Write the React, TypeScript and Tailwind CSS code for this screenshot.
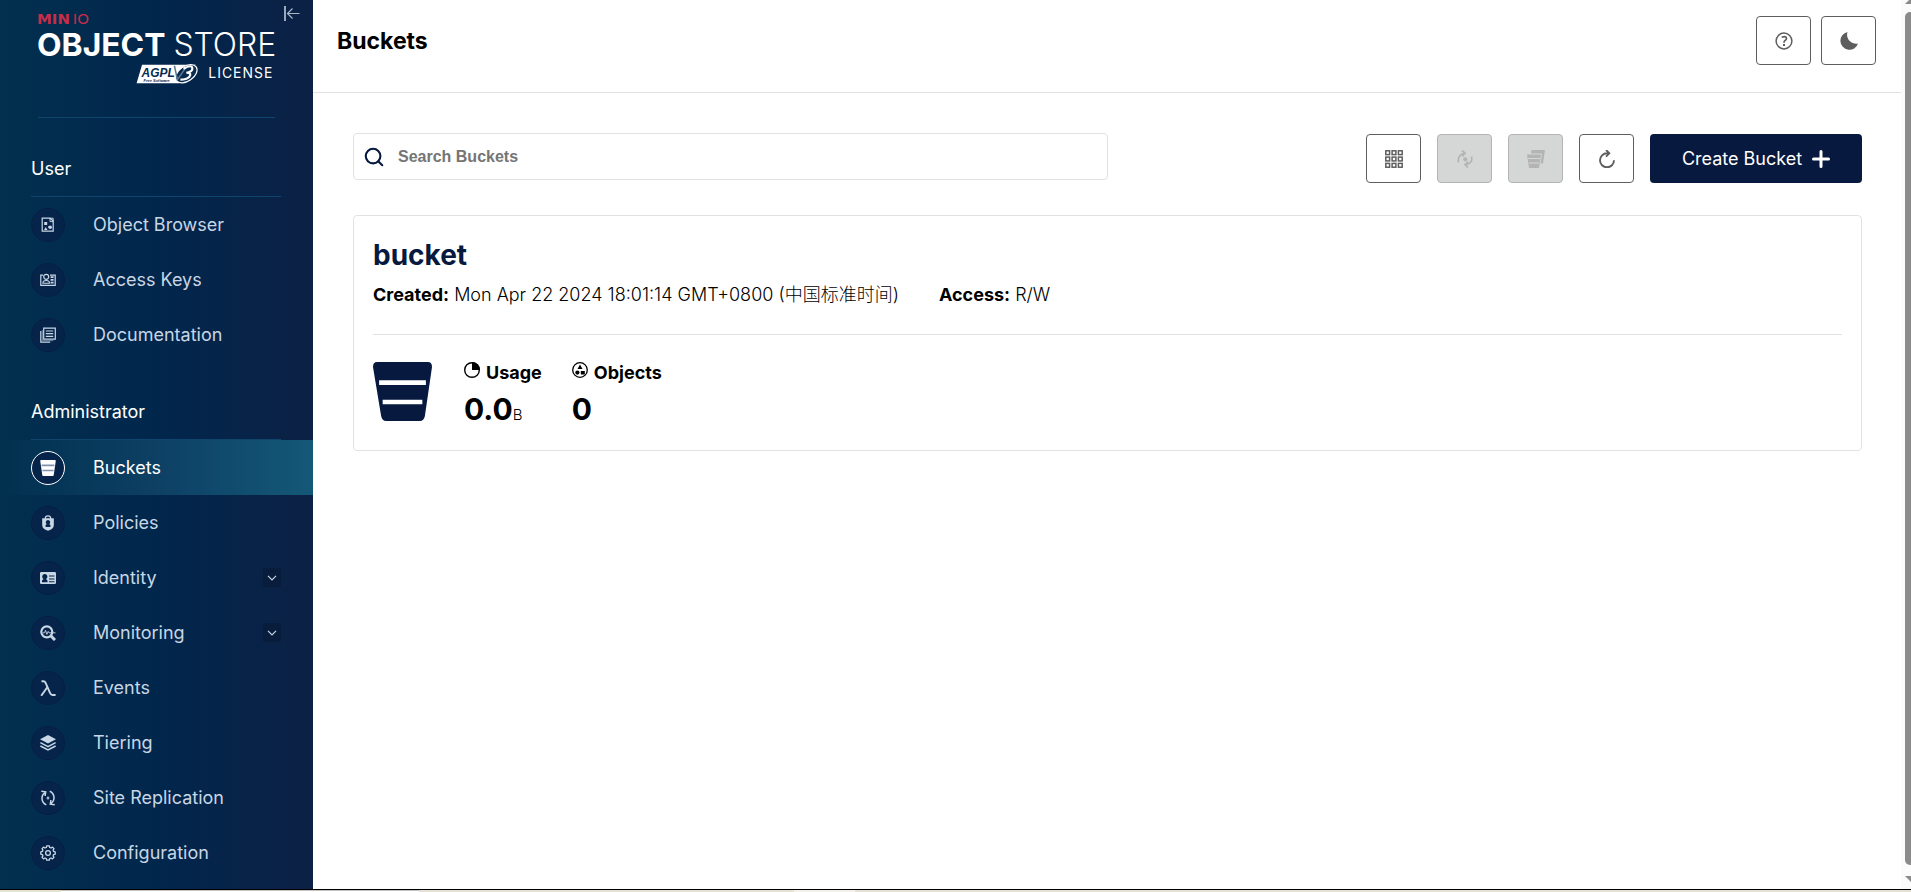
import { useState, type ReactNode } from "react";
import { Search } from "lucide-react";

type NavEntry = { label: string; icon: ReactNode; active?: boolean; expandable?: boolean };

const glyph = "h-4 w-4";

const ObjectBrowserIcon = () => (
  <svg viewBox="0 0 16 16" className={glyph} fill="none" stroke="currentColor">
    <path d="M2.2 1.2h7.6l3.4 2.6v10.4h-11z" strokeWidth="1.2" />
    <path d="M10 1.2h3.2v3.4H10z" strokeWidth="0.9" />
    <path d="M4.2 5h3v3h-3zM5.7 10l1.8 3H4zM8.2 9.2h1v1h-1z" fill="currentColor" stroke="none" />
    <circle cx="10.2" cy="10.3" r="1.8" fill="currentColor" stroke="none" />
  </svg>
);

const AccessKeysIcon = () => (
  <svg viewBox="0 0 16 16" className={glyph} fill="none" stroke="currentColor">
    <path d="M3 3.2H.8v10.2h14.4V3.2H10" strokeWidth="1.2" />
    <circle cx="6.2" cy="4.8" r="2.5" strokeWidth="1.2" />
    <path d="M2.9 11.2c0-3.6 6.6-3.6 6.6 0z" strokeWidth="1.1" />
    <path d="M10.6 5.2h3M10.6 7.8h3M10.6 10.6h3" strokeWidth="1.7" />
  </svg>
);

const DocumentationIcon = () => (
  <svg viewBox="0 0 16 16" className={glyph} fill="none" stroke="currentColor">
    <path d="M3.7 1.2h11.6v10.9H3.7z" strokeWidth="1.2" />
    <path d="M.8 4v11.2h9.4" strokeWidth="1.2" />
    <path d="M2.4 3.2v10.4h11" strokeWidth="0.5" />
    <path d="M5.8 4h7.4M5.8 6.6h7.4M5.8 9.4h7.4" strokeWidth="1.2" />
  </svg>
);

const BucketGlyph = ({ className }: { className: string }) => (
  <svg viewBox="0 0 58 58" className={className}>
    <path
      fill="currentColor"
      fillRule="evenodd"
      d="M4 0h50q4 0 4 5l-7 48q-1 5-5 5H13q-4 0-5-5L0 5q0-5 4-5zM6 18v4.500h46V18zM9.500 37v4.500h39V37z"
    />
  </svg>
);

const BucketNavIcon = () => (
  <svg viewBox="0 0 16 16" className={glyph}>
    <path fill="currentColor" d="M.8 0h14.400l.6.8L13.700 15.200q-.1.800-.9.800H3.200q-.8 0-.9-.8L.2.800z" />
    <path stroke="#8092ac" strokeWidth="1.700" d="M1.600 5.300h12.800M2.400 10.500h11.200" />
  </svg>
);

const PoliciesIcon = () => (
  <svg viewBox="0 0 16 16" className={glyph}>
    <path d="M5.300 4V3.200a2.700 2.400 0 0 1 5.400 0V4" fill="none" stroke="currentColor" strokeWidth="1.200" />
    <path
      fill="currentColor"
      fillRule="evenodd"
      d="M2.200 3.300h11.600v7q0 3.700-5.800 5.500-5.800-1.800-5.800-5.500zM8 5a2.200 2.200 0 0 0-1.300 4Q5.300 9.800 5.300 11.400q2.700 1.200 5.400 0Q10.700 9.800 9.300 9A2.200 2.200 0 0 0 8 5z"
    />
  </svg>
);

const IdentityIcon = () => (
  <svg viewBox="0 0 16 16" className={glyph}>
    <path
      fill="currentColor"
      fillRule="evenodd"
      d="M1.300 2h13.400q1.300 0 1.300 1.300v9.400q0 1.300-1.300 1.300H1.300Q0 14 0 12.700V3.300Q0 2 1.300 2zM2 10.500v1.800h5.500v-1.800L6 9a2.600 2.600 0 1 0-2.400 0zM9 5.600v1h5.500v-1zM9 8.400v1h5.500v-1zM9 11.200v1h5.500v-1z"
    />
  </svg>
);

const MonitoringIcon = () => (
  <svg viewBox="0 0 16 16" className={glyph} fill="none" stroke="currentColor">
    <circle cx="6.800" cy="6.800" r="5.500" strokeWidth="2.200" />
    <path d="M11 11l4 4" strokeWidth="3" />
    <path d="M3 7.800h1.500l1-2.600 1.400 4.200 1.300-3 .8 1.400H15.500" strokeWidth="0.900" />
  </svg>
);

const LambdaIcon = () => (
  <svg viewBox="0 0 16 16" className={glyph} fill="none" stroke="currentColor" strokeWidth="1.900">
    <path d="M1.500 1.200h1.800q1.600 0 2.300 1.600l4.500 10.300q.8 1.900 2.500 1.900h3" />
    <path d="M7.500 7L1.200 15.800" />
  </svg>
);

const TieringIcon = () => (
  <svg viewBox="0 0 16 16" className={glyph} fill="none" stroke="currentColor">
    <path d="M8 0l8 4.300-8 4.300-8-4.300z" fill="currentColor" stroke="none" />
    <path d="M.4 7.700L8 11.700l7.600-4M.4 11L8 15l7.600-4" strokeWidth="1.500" />
  </svg>
);

const SiteReplicationIcon = () => (
  <svg viewBox="0 0 16 16" className={glyph} fill="none" stroke="currentColor" strokeWidth="1.500">
    <path d="M6.300 14.800A7 7 0 0 1 5 2.600M1.300 1.200l4.400.6-.6 4.200" />
    <path d="M9.700 1.200a7 7 0 0 1 1.300 12.200M14.700 14.800l-4.400-.6.600-4.200" />
    <path d="M8 6.600v2.800M6.600 8h2.800" strokeWidth="1.200" />
  </svg>
);

const GearIcon = () => (
  <svg viewBox="0 0 16 16" className={glyph} fill="none" stroke="currentColor" strokeWidth="1.300">
    <path
      strokeLinejoin="round"
      d="M6.700.800h2.600l.4 1.700 1.300.5 1.500-.9 1.500 1.500-.9 1.500.5 1.300 1.600.4v2.400l-1.600.4-.5 1.300.9 1.500-1.500 1.500-1.500-.9-1.300.5-.4 1.700H6.700l-.4-1.700-1.300-.5-1.500.9L2 12.400l.9-1.500-.5-1.300-1.600-.4V6.800l1.600-.4.500-1.300L2 3.600l1.500-1.500 1.500.9 1.300-.5z"
    />
    <circle cx="8" cy="8" r="2.400" />
  </svg>
);

const userEntries: NavEntry[] = [
  { label: "Object Browser", icon: <ObjectBrowserIcon /> },
  { label: "Access Keys", icon: <AccessKeysIcon /> },
  { label: "Documentation", icon: <DocumentationIcon /> },
];

const adminEntries: NavEntry[] = [
  { label: "Buckets", icon: <BucketNavIcon />, active: true },
  { label: "Policies", icon: <PoliciesIcon /> },
  { label: "Identity", icon: <IdentityIcon />, expandable: true },
  { label: "Monitoring", icon: <MonitoringIcon />, expandable: true },
  { label: "Events", icon: <LambdaIcon /> },
  { label: "Tiering", icon: <TieringIcon /> },
  { label: "Site Replication", icon: <SiteReplicationIcon /> },
  { label: "Configuration", icon: <GearIcon /> },
];

function NavItem({ label, icon, active, expandable }: NavEntry) {
  return (
    <li>
      <a
        href="#"
        aria-current={active ? "page" : undefined}
        className={`flex h-[55px] items-center pr-8 pl-[31px] text-lg ${
          active
            ? "bg-linear-to-r from-[#02304f] via-[#0d4064] to-[#145878] text-white"
            : "text-[#c8d6e5]"
        }`}
      >
        <span
          className={`flex h-[34px] w-[34px] shrink-0 items-center justify-center rounded-full border bg-[#06244a] ${
            active ? "border-white" : "border-[#051f44]"
          }`}
        >
          {icon}
        </span>
        <span className="ml-7 flex-1">{label}</span>
        {expandable && (
          <span className="flex h-[19px] w-[18px] items-center justify-center rounded-xs bg-[#081c3c]">
            <svg viewBox="0 0 10 6" className="h-[6px] w-[10px]" fill="none" stroke="currentColor">
              <path d="M1 .8l4 4 4-4" strokeWidth="1.200" />
            </svg>
          </span>
        )}
      </a>
    </li>
  );
}

function NavGroup({ title, entries }: { title: string; entries: NavEntry[] }) {
  return (
    <section>
      <h2 className="mr-8 ml-[31px] border-b border-[#0f446c] pb-[13px] text-lg leading-7 text-white">
        {title}
      </h2>
      <ul>
        {entries.map((entry) => (
          <NavItem key={entry.label} {...entry} />
        ))}
      </ul>
    </section>
  );
}

function Logo() {
  return (
    <svg viewBox="0 0 238 72" className="block h-[72px] w-full overflow-visible" preserveAspectRatio="xMinYMin meet">
      <g fill="#c72c48" fontFamily="'DejaVu Sans', sans-serif" fontSize="15">
        <text x="-1" y="11" fontWeight="700">MIN</text>
        <text x="35" y="11">IO</text>
      </g>
      <g fill="#fff" fontFamily="Inter, sans-serif" fontSize="32">
        <text x="-1" y="43" fontWeight="700">OBJECT</text>
        <text x="136" y="43" fontWeight="300">STORE</text>
      </g>
      <path fill="#fff" d="M104.500 52h54q-8 9-17 18.500H99z" />
      <ellipse cx="149" cy="61" rx="12" ry="7.500" transform="rotate(-35 149 61)" fill="#082b50" stroke="#fff" strokeWidth="1.200" />
      <path d="M137 53l3 14 9-13" fill="none" stroke="#5f7690" strokeWidth="1.500" />
      <path d="M146 56q9-5 9 0 0 3-6 4 6 0 3 4-3 3-9 3" fill="none" stroke="#fff" strokeWidth="2.200" />
      <g fill="#082b50" fontFamily="'Liberation Sans Narrow', 'Liberation Sans', sans-serif" fontStyle="italic" fontWeight="700">
        <text x="104" y="64" fontSize="12">AGPL</text>
        <text x="106" y="69" fontSize="4">Free Software</text>
      </g>
      <text x="171" y="65" fill="#fff" fontFamily="Inter, sans-serif" fontSize="14" letterSpacing="1">LICENSE</text>
    </svg>
  );
}

function IconButton({ label, disabled, onClick, children }: { label: string; disabled?: boolean; onClick?: () => void; children: ReactNode }) {
  return (
    <button
      type="button"
      aria-label={label}
      disabled={disabled}
      onClick={onClick}
      className="flex h-[49px] w-[55px] shrink-0 items-center justify-center rounded-sm border border-[#5e5e5e] bg-white text-[#5e5e5e] disabled:border-[#b4b4b4] disabled:bg-[#d5d7d6] disabled:text-[#b4b4b4]"
    >
      {children}
    </button>
  );
}

const gridCells = [0, 1, 2].flatMap((row) => [0, 1, 2].map((col) => ({ x: col * 6.3 + 0.8, y: row * 6.3 + 0.8 })));

export default function App() {
  const [query, setQuery] = useState("");

  return (
    <div className="flex h-screen flex-col bg-white font-[Inter,'Noto_Sans_CJK_SC',sans-serif] text-black">
      <div className="flex min-h-0 flex-1">
        <aside className="relative w-[313px] shrink-0 overflow-hidden bg-linear-to-r from-[#03304f] via-[#01264c] to-[#0c2145]">
          <button type="button" aria-label="Collapse menu" className="absolute top-[6px] right-[13px] text-[#a9b9cb]">
            <svg viewBox="0 0 16 15" className="h-[15px] w-4" fill="none" stroke="currentColor">
              <path d="M1 0v15" strokeWidth="1.800" />
              <path d="M15.500 7.500H4M8.500 2.500l-5 5 5 5" strokeWidth="1.200" />
            </svg>
          </button>
          <div className="mx-[38px] border-b border-[#0f446c] pt-[13px] pb-8">
            <Logo />
          </div>
          <nav className="flex flex-col gap-9 pt-[37px]">
            <NavGroup title="User" entries={userEntries} />
            <NavGroup title="Administrator" entries={adminEntries} />
          </nav>
        </aside>

        <main className="min-w-0 flex-1">
          <header className="flex h-[93px] items-start justify-between border-b border-[#e2e2e2] pt-4 pr-[25px] pl-6">
            <h1 className="pt-[9px] text-[23px] leading-8 font-bold">Buckets</h1>
            <div className="flex gap-[10px]">
              <IconButton label="Help">
                <svg viewBox="0 0 18 18" className="h-[18px] w-[18px]" fill="none" stroke="currentColor">
                  <circle cx="9" cy="9" r="7.900" strokeWidth="1.500" />
                  <path d="M6.700 5.200q4.800-1.400 4.800 1.300 0 1.300-1.400 1.900Q9 9 9 10.800" strokeWidth="1.700" />
                  <path d="M9 12v2" strokeWidth="2" />
                </svg>
              </IconButton>
              <IconButton label="Dark mode">
                <svg viewBox="0 0 18 18" className="h-[18px] w-[18px]">
                  <path fill="currentColor" d="M7.500 0A9 9 0 1 0 18 11.500 9 9 0 0 1 7.500 0z" />
                </svg>
              </IconButton>
            </div>
          </header>

          <div className="pt-10 pr-[39px] pl-10">
            <div className="flex items-start justify-between">
              <label className="flex h-[47px] w-1/2 items-center gap-[13px] rounded-sm border border-[#e2e2e2] px-[9px]">
                <Search className="h-[22px] w-[22px] text-[#07193e]" strokeWidth={2.3} />
                <input
                  aria-label="Search Buckets"
                  placeholder="Search Buckets"
                  value={query}
                  onChange={(event) => setQuery(event.target.value)}
                  className="min-w-0 flex-1 bg-transparent font-['Liberation_Sans',sans-serif] text-base font-bold outline-none placeholder:text-[#757575]"
                />
              </label>
              <div className="flex gap-4 pt-px">
                <IconButton label="Grid view">
                  <svg viewBox="0 0 18 18" className="h-[18px] w-[18px]" fill="none" stroke="currentColor">
                    {gridCells.map(({ x, y }) => (
                      <rect key={`${x}-${y}`} x={x} y={y} width="3.800" height="3.800" strokeWidth="1.500" />
                    ))}
                  </svg>
                </IconButton>
                <IconButton label="Set replication" disabled>
                  <svg viewBox="0 0 18 18" className="h-[18px] w-[18px]" fill="none" stroke="currentColor" strokeWidth="1.700">
                    <path d="M2.500 12.500Q1 5 8.500 3.300M6 .500l3 2.700-2.600 3.300M15.500 6.500q1.500 7-6 8.200M12 11.500l-3 3.200 3 2.800" />
                    <circle cx="9.200" cy="9.300" r="2.100" fill="currentColor" stroke="none" />
                  </svg>
                </IconButton>
                <IconButton label="Set lifecycle" disabled>
                  <svg viewBox="0 0 18 18" className="h-[18px] w-[18px]" fill="currentColor">
                    <path d="M4.500 0H18l-2 13.500h-2.500L15 3.500H4zM0 4.500h14l-2 13.500H2z" />
                    <path d="M1 8.500h12M2 13h10" stroke="#d5d7d6" />
                  </svg>
                </IconButton>
                <IconButton label="Refresh">
                  <svg viewBox="0 0 18 18" className="h-[18px] w-[18px]" fill="none" stroke="currentColor" strokeWidth="1.900">
                    <path d="M10.500 3.300H9A7 7 0 1 0 16 10.300M8 0l3.300 3.300L8 6.600" />
                  </svg>
                </IconButton>
                <button type="button" className="flex h-[49px] w-[212px] items-center justify-center gap-[10px] rounded-sm bg-[#07193e] text-lg text-white">
                  Create Bucket
                  <svg viewBox="0 0 18 18" className="h-[18px] w-[18px]" stroke="currentColor" strokeWidth="3" strokeLinecap="round">
                    <path d="M9 1.500v15M1.500 9h15" />
                  </svg>
                </button>
              </div>
            </div>

            <article className="mt-8 rounded-sm border border-[#e2e2e2] px-[19px] pt-[19px] pb-[10px]">
              <h2 className="text-[28px] leading-10 font-bold text-[#07193e]">bucket</h2>
              <div className="flex gap-10 border-b border-[#e2e2e2] pt-[6px] pb-[25px] text-lg font-light">
                <p><b className="font-bold">Created:</b> Mon Apr 22 2024 18:01:14 GMT+0800 (中国标准时间)</p>
                <p><b className="font-bold">Access:</b> R/W</p>
              </div>
              <div className="flex pt-[27px]">
                <BucketGlyph className="h-[59px] w-[59px] text-[#07193e]" />
                <div className="ml-8">
                  <p className="flex gap-[6px] text-lg leading-[22px] font-bold">
                    <svg viewBox="0 0 16 16" className="h-4 w-4">
                      <circle cx="8" cy="8" r="7.300" fill="none" stroke="currentColor" strokeWidth="1.400" />
                      <path d="M8 0v8h8A8 8 0 0 0 8 0z" fill="currentColor" />
                    </svg>
                    Usage
                  </p>
                  <p className="text-[30px] leading-[50px] font-bold">0.0<span className="text-[15px] font-light">B</span></p>
                </div>
                <div className="ml-[30px]">
                  <p className="flex gap-[6px] text-lg leading-[22px] font-bold">
                    <svg viewBox="0 0 16 16" className="h-4 w-4">
                      <circle cx="8" cy="8" r="7.300" fill="none" stroke="currentColor" strokeWidth="1.300" />
                      <path d="M8 2.500l2.500 4.500h-5zM8.800 9h4v3.500h-4z" fill="currentColor" />
                      <circle cx="5.400" cy="10.600" r="2.100" fill="currentColor" />
                    </svg>
                    Objects
                  </p>
                  <p className="text-[30px] leading-[50px] font-bold">0</p>
                </div>
              </div>
            </article>
          </div>
        </main>

        <div aria-hidden="true" className="flex w-[10px] shrink-0 flex-col justify-between overflow-hidden bg-[#fbfbfb] pl-1">
          <svg viewBox="0 0 9 4" className="h-1 w-[9px] shrink-0"><path d="M0 4l4-4h5v4z" fill="#8b8b8b" /></svg>
          <div className="mt-2 mb-[11px] w-4 flex-1 rounded-[5px] bg-[#8b8b8b]" />
          <svg viewBox="0 0 9 13" className="h-[13px] w-[9px] shrink-0"><path d="M0 0h9v7H7z" fill="#8b8b8b" /></svg>
        </div>
      </div>
      <div className="flex h-[3px] shrink-0 border-t border-black bg-[#e6e2d3]">
        <div className="ml-[61px] w-[358px] border-t border-[#c4c4c4] bg-white" />
        <div className="ml-[375px] w-[61px] bg-[#f3f1ea]" />
      </div>
    </div>
  );
}
